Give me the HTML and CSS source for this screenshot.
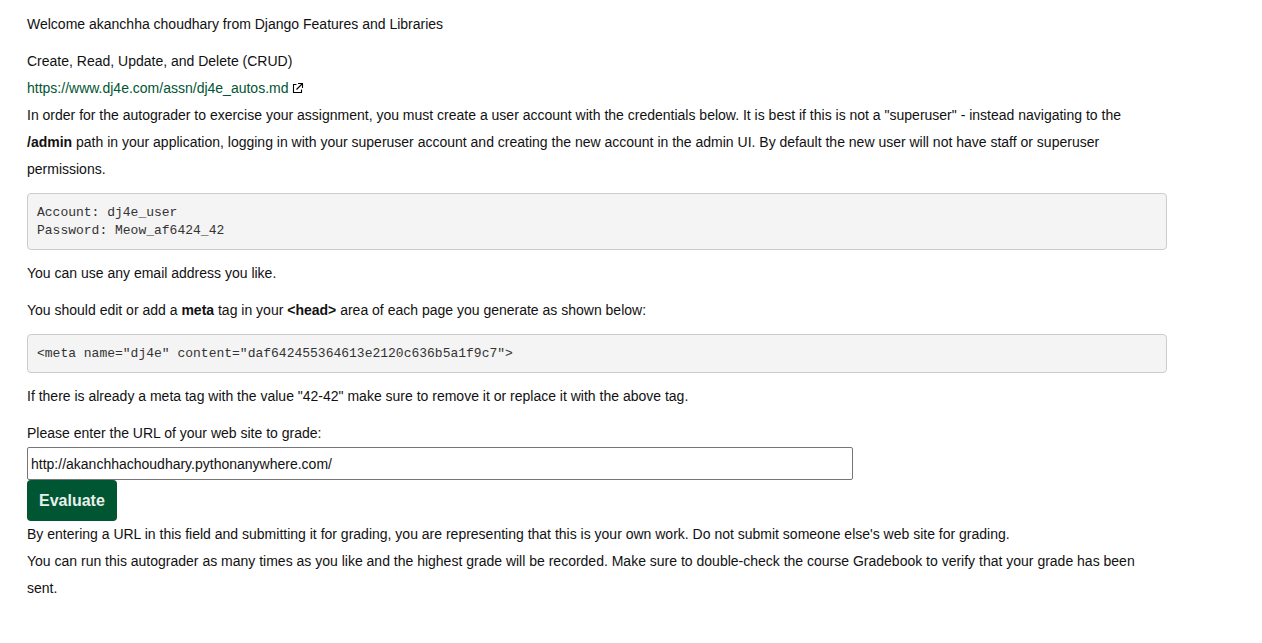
FILE: index.html
```
<!DOCTYPE html>
<html lang="en">
<head>
<meta charset="utf-8">
<title>Django Features and Libraries</title>
<link rel="stylesheet" href="styles.css">
</head>
<body>
<main class="page">
  <p class="text">Welcome akanchha choudhary from Django Features and Libraries</p>
  <p class="text">Create, Read, Update, and Delete (CRUD)<br>
    <a class="link" href="https://www.dj4e.com/assn/dj4e_autos.md">https://www.dj4e.com/assn/dj4e_autos.md<svg class="link-icon" viewBox="0 0 12 12" aria-hidden="true"><path d="M4.5 2.5H1.5V10.5H9.5V7.5M6 1.5H10.5V6M10.5 1.5L4.5 7.5"/></svg></a><br>
    In order for the autograder to exercise your assignment, you must create a user account with the credentials below. It is best if this is not a "superuser" - instead navigating to the <b>/admin</b> path in your application, logging in with your superuser account and creating the new account in the admin UI. By default the new user will not have staff or superuser permissions.</p>
  <pre class="code">Account: dj4e_user
Password: Meow_af6424_42
</pre>
  <p class="text">You can use any email address you like.</p>
  <p class="text">You should edit or add a <b>meta</b> tag in your <b>&lt;head&gt;</b> area of each page you generate as shown below:</p>
  <pre class="code">&lt;meta name="dj4e" content="daf642455364613e2120c636b5a1f9c7"&gt;</pre>
  <p class="text">If there is already a meta tag with the value "42-42" make sure to remove it or replace it with the above tag.</p>
  <form class="form">
    <label class="label" for="url">Please enter the URL of your web site to grade:</label>
    <input class="field" id="url" type="text" value="http://akanchhachoudhary.pythonanywhere.com/">
    <button class="button" type="submit">Evaluate</button>
  </form>
  <p class="text">By entering a URL in this field and submitting it for grading, you are representing that this is your own work. Do not submit someone else's web site for grading.<br>
    You can run this autograder as many times as you like and the highest grade will be recorded. Make sure to double-check the course Gradebook to verify that your grade has been sent.</p>
</main>
</body>
</html>
```
FILE: styles.css
```
* {
  box-sizing: border-box;
}

body {
  margin: 0;
  background: #fff;
  color: #111;
  font: 14px/27px "Liberation Sans", Arial, sans-serif;
}

.page {
  max-width: 1194px;
  padding: 11px 27px;
}

.text {
  margin: 0 0 10px;
}

.link {
  color: #005533;
  text-decoration: none;
}

.link-icon {
  width: 12px;
  height: 12px;
  margin-left: 4px;
  vertical-align: -1px;
  fill: none;
  stroke: #000;
  stroke-width: 1.1;
}

.code {
  margin: 0 0 10px;
  padding: 10px 9px 9px;
  border: 1px solid #ccc;
  border-radius: 4px;
  background: #f4f4f4;
  color: #333;
  font: 13px/18px "Liberation Mono", "Courier New", monospace;
}

.form {
  display: flex;
  flex-direction: column;
  align-items: flex-start;
}

.field {
  width: 826px;
  max-width: 100%;
  height: 33px;
  padding: 1px 3px;
  border: 1px solid #767676;
  border-radius: 2px;
  color: #111;
  font: inherit;
}

.button {
  height: 41px;
  padding: 0 12px;
  border: 0;
  border-radius: 4px;
  background: #005533;
  color: #e8f0ec;
  font: bold 16px/24px "Liberation Sans", Arial, sans-serif;
}
```
